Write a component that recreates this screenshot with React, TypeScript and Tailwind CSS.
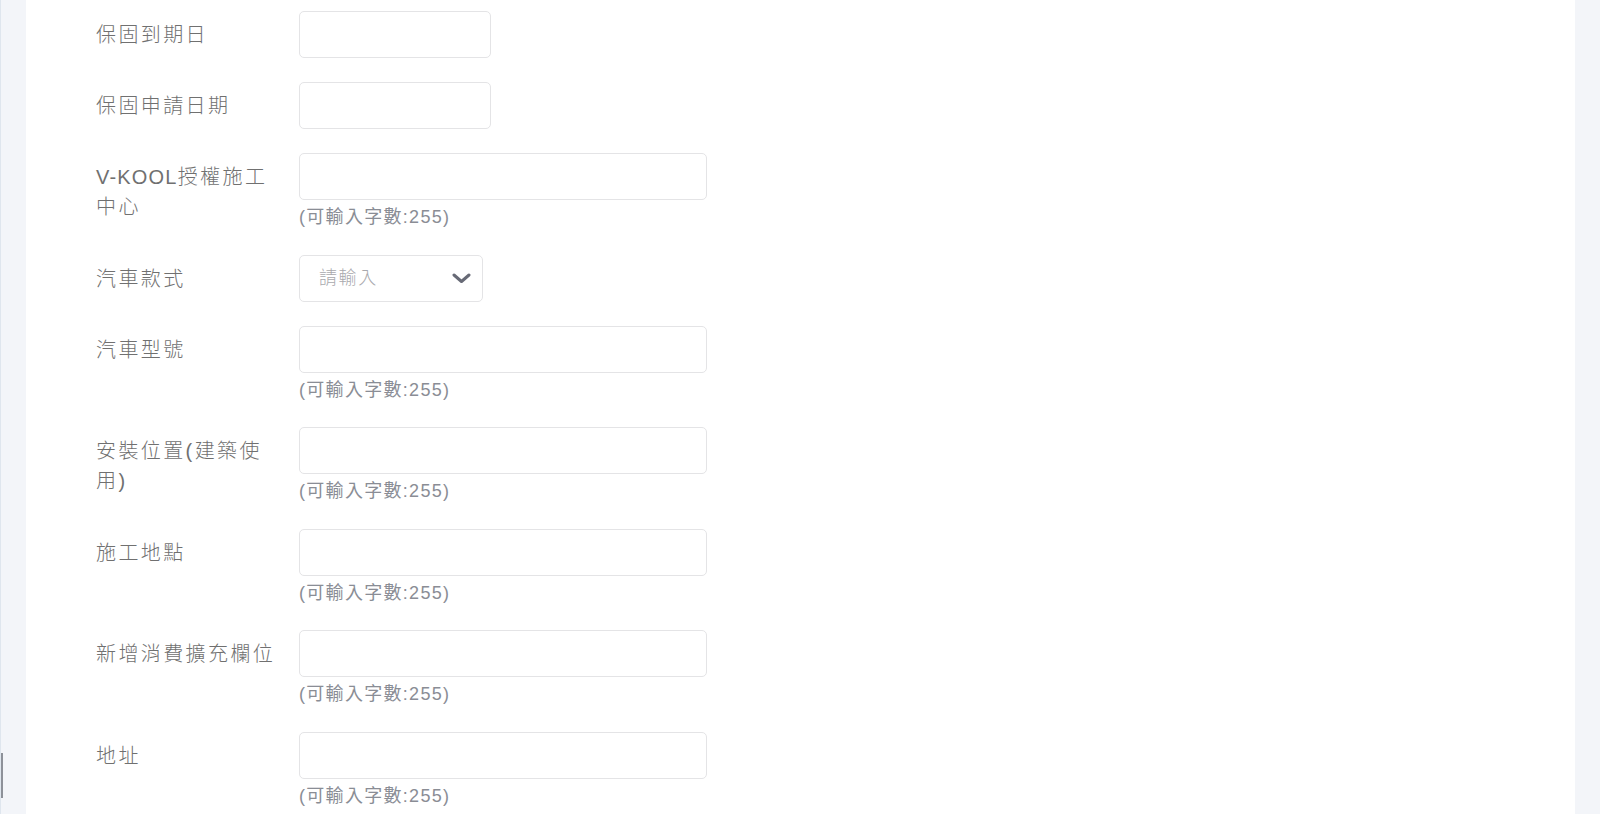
// Warranty / install info form — label column on the left, inputs on the right.
// Rows with a text input show the character-limit hint underneath.

const FONT = "font-['Liberation_Sans','Noto_Sans_CJK_TC',sans-serif]"

type Row = {
  label: string
  kind: "short" | "wide" | "select"
  hint?: boolean
}

const ROWS: Row[] = [
  { label: "保固到期日", kind: "short" },
  { label: "保固申請日期", kind: "short" },
  { label: "V-KOOL授權施工中心", kind: "wide", hint: true },
  { label: "汽車款式", kind: "select" },
  { label: "汽車型號", kind: "wide", hint: true },
  { label: "安裝位置(建築使用)", kind: "wide", hint: true },
  { label: "施工地點", kind: "wide", hint: true },
  { label: "新增消費擴充欄位", kind: "wide", hint: true },
  { label: "地址", kind: "wide", hint: true },
]

// latin runs are set tighter than the CJK glyphs
function LabelText({ text }: { text: string }) {
  return (
    <>
      {text.split(/([A-Za-z-]+)/).map((part, i) =>
        /^[A-Za-z-]+$/.test(part) ? (
          <span key={i} className="tracking-[1.2px]">
            {part}
          </span>
        ) : (
          part
        )
      )}
    </>
  )
}

function Field({ row }: { row: Row }) {
  if (row.kind === "select") {
    return (
      <div className="flex h-[47px] w-[184px] items-center justify-between rounded-[5px] border border-[#e4e4e6] bg-white pl-[19px] pr-[11px]">
        <span className="text-[18px] font-light tracking-[1.6px] text-[#a9a9ad]">請輸入</span>
        <svg width="19" height="11" viewBox="0 0 19 11" fill="none">
          <polyline
            points="2,2 9.5,8.5 17,2"
            stroke="#676a76"
            strokeWidth="3"
            strokeLinecap="round"
            strokeLinejoin="round"
          />
        </svg>
      </div>
    )
  }

  return (
    <div className="flex flex-col">
      <input
        type="text"
        className={
          row.kind === "short"
            ? "h-[47px] w-[192px] rounded-[5px] border border-[#e4e4e6] bg-white px-3 outline-none"
            : "h-[47px] w-[408px] rounded-[5px] border border-[#e4e4e6] bg-white px-3 outline-none"
        }
      />
      {row.hint && (
        <p className="pt-[7px] pb-[3.5px] text-[18px] leading-5 tracking-[1.3px] text-[#8a8d95]">
          (可輸入字數:255)
        </p>
      )}
    </div>
  )
}

export default function App() {
  return (
    <div className={`relative flex min-h-screen border-l border-[#dfe6ee] bg-[#f3f5f9] pl-[25px] pr-[25px] ${FONT}`}>
      {/* leftover scrollbar thumb at the very edge */}
      <div className="absolute left-0 top-[753px] h-[45px] w-[2px] bg-[#8d9199]" />

      <main className="flex-1 bg-white pl-[70px] pt-[11px]">
        {ROWS.map((row) => (
          <div key={row.label} className="mb-[24px] flex items-start">
            <label className="mr-[21px] w-[182px] shrink-0 pt-[9px] text-[20px] font-light leading-[30px] tracking-[2.4px] text-[#707070]">
              <LabelText text={row.label} />
            </label>
            <Field row={row} />
          </div>
        ))}
      </main>
    </div>
  )
}
